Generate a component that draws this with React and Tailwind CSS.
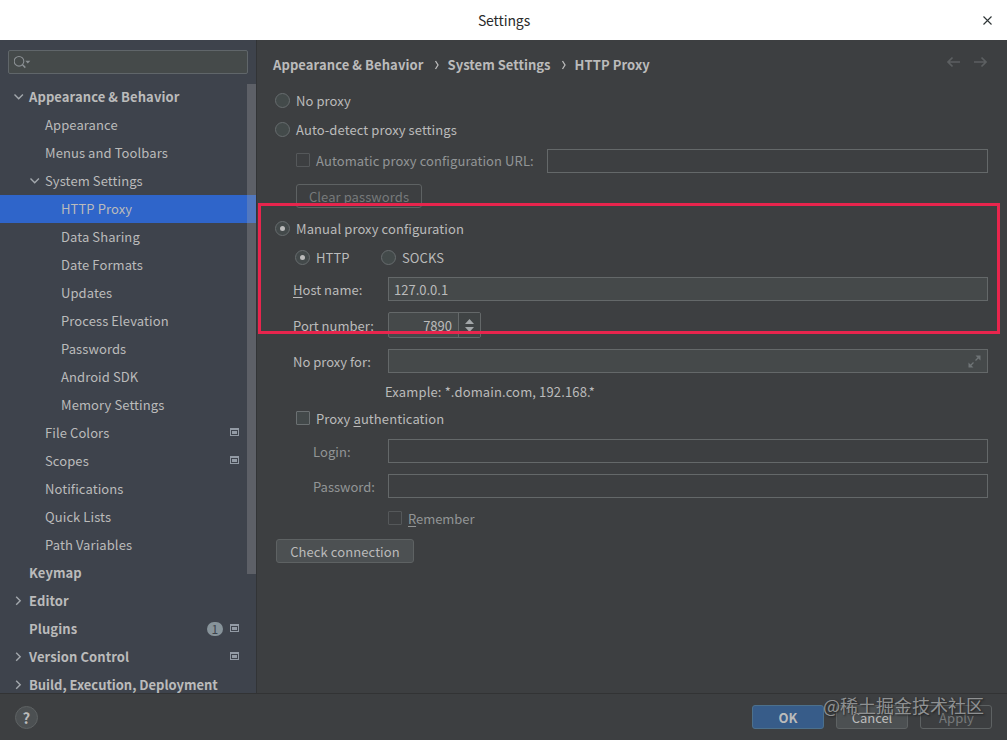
import React from 'react';

const tree = [
    { label: 'Appearance & Behavior', level: 0, arrow: 'down' },
    { label: 'Appearance', level: 1 },
    { label: 'Menus and Toolbars', level: 1 },
    { label: 'System Settings', level: 1, arrow: 'down' },
    { label: 'HTTP Proxy', level: 2, selected: true },
    { label: 'Data Sharing', level: 2 },
    { label: 'Date Formats', level: 2 },
    { label: 'Updates', level: 2 },
    { label: 'Process Elevation', level: 2 },
    { label: 'Passwords', level: 2 },
    { label: 'Android SDK', level: 2 },
    { label: 'Memory Settings', level: 2 },
    { label: 'File Colors', level: 1, project: true },
    { label: 'Scopes', level: 1, project: true },
    { label: 'Notifications', level: 1 },
    { label: 'Quick Lists', level: 1 },
    { label: 'Path Variables', level: 1 },
    { label: 'Keymap', level: 0 },
    { label: 'Editor', level: 0, arrow: 'right' },
    { label: 'Plugins', level: 0, badge: 1, project: true },
    { label: 'Version Control', level: 0, arrow: 'right', project: true },
    { label: 'Build, Execution, Deployment', level: 0, arrow: 'right', tight: true },
];

const indents = ['pl-[13px]', 'pl-[29px]', 'pl-[45px]'];

const Arrow = ({ dir }) => (
    <svg className="w-4 h-4 shrink-0" viewBox="0 0 16 16" fill="none" stroke="#a3a8ad" strokeWidth="1.4">
        {dir === 'down' && <path d="M1.5 5.5l4.2 4.2 4.2-4.2" />}
        {dir === 'right' && <path d="M3.2 3.8l4 4-4 4" />}
    </svg>
);

const ProjectIcon = () => (
    <svg className="w-[9px] h-2 -mt-0.5 shrink-0" viewBox="0 0 9 8" shapeRendering="crispEdges">
        <path fill="#939ba5" fillRule="evenodd" d="M0 0h9v8H0zM1 2v5h7V2z" />
        <path fill="#939ba5" d="M2 3h5v3H2z" />
    </svg>
);

const TreeRow = ({ item }) => (
    <div className={`flex items-center h-7 shrink-0 pr-[17px] ${indents[item.level]} ${item.selected ? 'bg-[#2f65ca]' : ''} ${item.level === 0 ? 'font-bold' : ''}`}>
        <Arrow dir={item.arrow} />
        <span className={`flex-1 whitespace-nowrap ${item.tight ? 'tracking-[-0.03px]' : ''}`}>{item.label}</span>
        {item.badge && (
            <span className="w-4 h-[14px] mr-[7px] rounded-full bg-[#87939a] text-[#3d434c] text-[12px] leading-[14px] font-normal text-center">{item.badge}</span>
        )}
        {item.project && <ProjectIcon />}
    </div>
);

const Radio = ({ label, checked }) => (
    <label className="flex items-center whitespace-nowrap">
        <span className={`w-[15px] h-[15px] -mt-px mr-1.5 rounded-full border border-[#676c6e] flex items-center justify-center ${checked ? 'bg-[#43494a]' : 'bg-[#434a4a]'}`}>
            {checked && <span className="w-[5px] h-[5px] rounded-full bg-[#bbbbbb]"></span>}
        </span>
        {label}
    </label>
);

const Checkbox = ({ children, disabled }) => (
    <label className={`flex items-center whitespace-nowrap ${disabled ? 'text-[#929596]' : ''}`}>
        <span className={`w-[14px] h-[14px] -mt-0.5 mr-1.5 border rounded-[1px] ${disabled ? 'border-[#55585a]' : 'border-[#6b7072] bg-[#43494a]'}`}></span>
        <span>{children}</span>
    </label>
);

const Field = ({ disabled, children }) => (
    <div className={`flex-1 flex items-center h-6 pl-[5px] border border-[#646869] ${disabled ? '' : 'bg-[#45494a]'}`}>{children}</div>
);

const Sidebar = () => (
    <div className="relative w-[257px] shrink-0 flex flex-col bg-[#3e434c] border-r border-[#323436] overflow-hidden">
        <div className="h-6 mt-[10px] ml-2 mr-2 w-[240px] shrink-0 flex items-center pl-[5px] border border-[#60666a] rounded-[2px] bg-[#454a4a]">
            <svg className="w-[18px] h-4" viewBox="0 0 18 16" fill="none" stroke="#8b9094" strokeWidth="1.1">
                <circle cx="5" cy="7.300" r="4.800" />
                <path d="M8.500 10.800l2.800 2.800" strokeWidth="1.500" />
                <path d="M11.300 6.800h5l-2.500 2.700z" fill="#8b9094" stroke="none" />
            </svg>
        </div>
        <div className="mt-[9px] flex flex-col">
            {tree.map((item) => (
                <TreeRow key={item.label} item={item} />
            ))}
        </div>
        <div className="absolute right-0 top-11 w-[9px] h-[490px] bg-[#a6a6a6]/30"></div>
    </div>
);

const Separator = () => (
    <svg className="w-6 h-4" viewBox="0 0 24 16" fill="none" stroke="#bbbbbb" strokeWidth="1.3">
        <path d="M11.500 4l2.500 4-2.500 4" />
    </svg>
);

const ProxyPanel = () => (
    <div className="relative flex-1 flex flex-col pl-[18px] pr-[19px] bg-[#3d3f41]">
        <div className="h-[50px] -ml-0.5 shrink-0 flex items-center font-bold">
            <span>Appearance &amp; Behavior</span>
            <Separator />
            <span className="tracking-[0.03px]">System Settings</span>
            <Separator />
            <span>HTTP Proxy</span>
            <svg className="w-[42px] h-3 ml-auto -mt-1.5" viewBox="0 0 42 12" fill="none" stroke="#5c5f61" strokeWidth="1.7">
                <path d="M14 6H2M6.500 1.500L2 6l4.500 4.500M28 6h12M35.500 1.500L40 6l-4.500 4.500" />
            </svg>
        </div>
        <div className="h-[22px] flex items-center"><Radio label="No proxy" /></div>
        <div className="h-[22px] mt-[7px] flex items-center"><Radio label="Auto-detect proxy settings" /></div>
        <div className="h-6 mt-2 pl-[21px] flex items-center">
            <div className="w-[251px]"><Checkbox disabled>Automatic proxy configuration URL:</Checkbox></div>
            <Field disabled />
        </div>
        <button className="w-[126px] h-6 mt-[11px] ml-[21px] pt-px flex items-center justify-center border border-[#5e6263] rounded-[3px] text-[#777a7b]">
            Clear passwords
        </button>
        <div className="h-[22px] mt-[10px] flex items-center"><Radio label="Manual proxy configuration" checked /></div>
        <div className="h-[22px] mt-[7px] pl-5 flex items-center">
            <div className="w-[86px]"><Radio label="HTTP" checked /></div>
            <Radio label="SOCKS" />
        </div>
        <div className="h-6 mt-2 pl-[18px] flex items-center">
            <span className="w-[95px] pt-px tracking-[0.03px]"><u className="underline-offset-2">H</u>ost name:</span>
            <Field><span className="pt-px tracking-normal">127.0.0.1</span></Field>
        </div>
        <div className="h-[26px] mt-[11px] pl-[18px] flex items-center">
            <span className="w-[95px] pt-px tracking-normal">Port number:</span>
            <div className="w-[93px] h-[26px] flex border border-[#646869] rounded-[2px] bg-[#45494a]">
                <span className="flex-1 flex items-center justify-end pt-px pr-1.5 border-r border-[#646869] tracking-normal">7890</span>
                <span className="w-[21px] flex items-center justify-center bg-[#3f4344]">
                    <svg className="w-[9px] h-[13px]" viewBox="0 0 9 13" fill="#a3a7a9">
                        <path d="M0 5L4.500 0 9 5zM0 8l4.500 5L9 8z" />
                    </svg>
                </span>
            </div>
        </div>
        <div className="h-6 mt-[11px] pl-[18px] flex items-center">
            <span className="w-[95px] pt-px tracking-normal">No proxy for:</span>
            <Field>
                <svg className="w-[13px] h-[13px] ml-auto mr-[6px]" viewBox="0 0 13 13" fill="#6f7476" stroke="#6f7476">
                    <path d="M7.500 .5h5v5zM.5 7.500v5h5z" stroke="none" />
                    <path d="M7.500 5.500l3-3M5.500 7.500l-3 3" strokeWidth="1.300" />
                </svg>
            </Field>
        </div>
        <div className="h-[22px] mt-2 pl-[110px] flex items-center tracking-[0.14px]">Example: *.domain.com, 192.168.*</div>
        <div className="h-[22px] mt-[5px] pl-[21px] flex items-center">
            <Checkbox>Proxy <u className="underline-offset-2">a</u>uthentication</Checkbox>
        </div>
        <div className="h-6 mt-[9px] pl-[38px] flex items-center">
            <span className="w-[75px] pt-px text-[#929596]">Login:</span>
            <Field disabled />
        </div>
        <div className="h-6 mt-[11px] pl-[38px] flex items-center">
            <span className="w-[75px] pt-px tracking-normal text-[#929596]">Password:</span>
            <Field disabled />
        </div>
        <div className="h-[22px] mt-[10px] pl-[113px] flex items-center tracking-[-0.05px]">
            <Checkbox disabled><u className="underline-offset-2">R</u>emember</Checkbox>
        </div>
        <button className="w-[138px] h-6 mt-[9px] ml-px pt-px flex items-center justify-center border border-[#5e6263] rounded-[3px] bg-[#4c5052]">
            Check connection
        </button>
        {/* highlight around the manual proxy settings */}
        <div className="absolute left-px top-[163px] w-[742px] h-[131px] border-3 border-[#e8254d]"></div>
    </div>
);

const App = () => {
    return (
        <div className="w-[1007px] h-[740px] flex flex-col overflow-hidden bg-[#3d3f41] text-[13px] leading-[20px] tracking-[0.09px] text-[#bbbbbb] font-['Noto_Sans_CJK_SC',sans-serif]">
            <div className="relative h-10 shrink-0 flex items-center justify-center bg-white text-[#2b2b2b]">
                <span className="text-[14px] tracking-[-0.1px] pl-px">Settings</span>
                <svg className="absolute right-[15px] top-4 w-[9px] h-[9px]" viewBox="0 0 9 9" stroke="#2e3436" strokeWidth="1.1">
                    <path d="M.5 .5l8 8M8.500 .5l-8 8" />
                </svg>
            </div>
            <div className="h-[653px] shrink-0 flex overflow-hidden">
                <Sidebar />
                <ProxyPanel />
            </div>
            <div className="relative flex-1 flex items-center pl-[15px] pr-[15px] border-t border-[#323334]">
                <span className="w-[23px] h-[23px] mt-px rounded-full border border-[#5e6263] bg-[#4c5052] flex items-center justify-center font-bold text-[15px]">?</span>
                <div className="ml-auto flex gap-3">
                    <button className="w-[72px] h-6 pt-px flex items-center justify-center border border-[#4c708c] rounded-[3px] bg-[#375c89] font-bold">OK</button>
                    <button className="w-[72px] h-6 pt-px flex items-center justify-center border border-[#5e6263] rounded-[3px] bg-[#4c5052] tracking-[-0.05px]">Cancel</button>
                    <button className="w-[72px] h-6 pt-px pl-px flex items-center justify-center border border-[#5e6263] rounded-[3px] text-[#777a7b]">Apply</button>
                </div>
                <div className="absolute right-[23px] -top-0.5 text-[18px] leading-[26px] tracking-normal text-[#a9abac]/80 [text-shadow:1px_1px_2px_#1f2021]">@稀土掘金技术社区</div>
            </div>
        </div>
    );
};

export default App;
